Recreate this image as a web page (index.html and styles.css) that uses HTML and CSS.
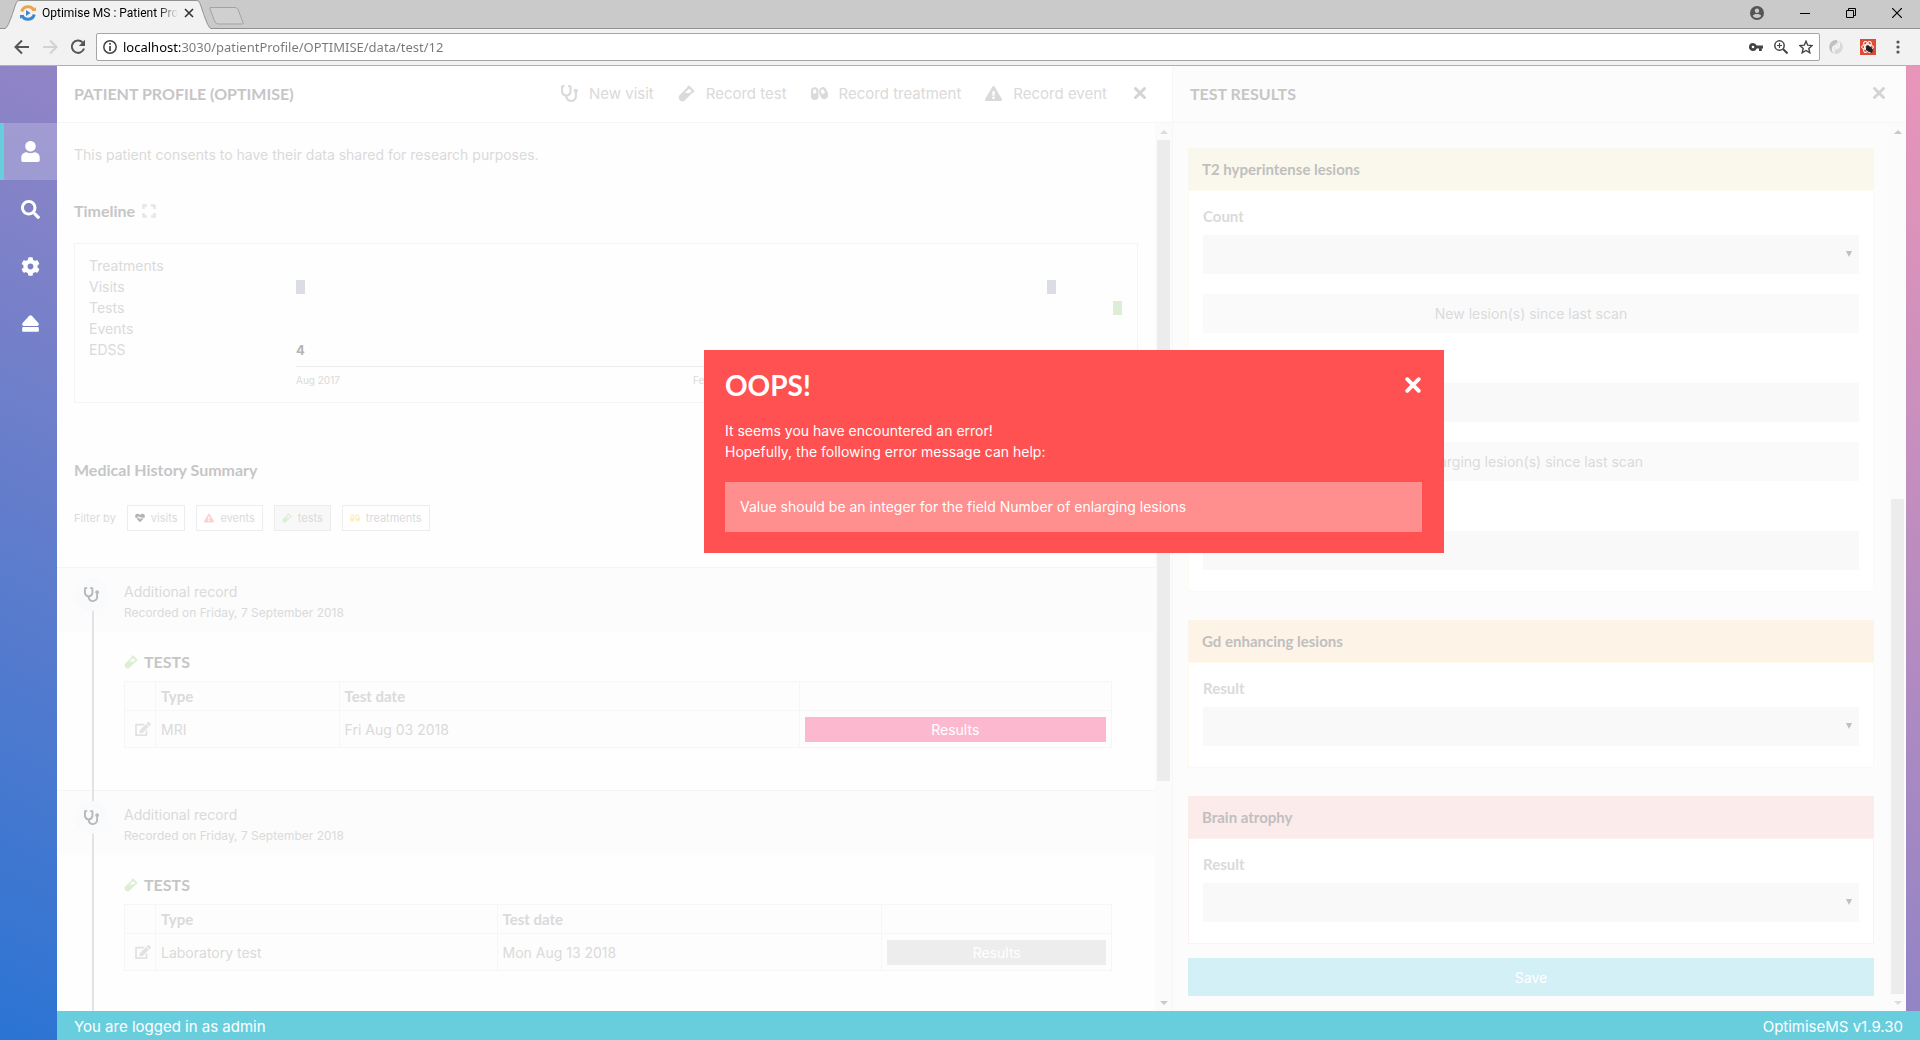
FILE: index.html
```html
<!DOCTYPE html>
<html lang="en">
<head>
<meta charset="utf-8">
<title>Optimise MS : Patient Profile</title>
<link rel="stylesheet" href="styles.css">
</head>
<body>
<svg class="sprite" aria-hidden="true">
  <symbol id="i-stethoscope" viewBox="0 0 512 512"><path d="M447.1 112c-34.2.5-62.3 28.4-63 62.6-.5 24.3 12.5 45.6 32 56.8V344c0 57.3-50.2 104-112 104-60 0-109.2-44.1-111.9-99.2C265 333.8 320 269.2 320 192V36.6c0-11.4-8.1-21.3-19.3-23.5L237.8.5c-13-2.6-25.6 5.8-28.2 18.8L206.4 35c-2.6 13 5.8 25.6 18.8 28.2l30.7 6.1v121.4c0 52.9-42.2 96.7-95.1 97.2-53.4.5-96.9-42.7-96.9-96V69.4l30.7-6.1c13-2.6 21.4-15.2 18.8-28.2l-3.1-15.7C107.7 6.4 95.1-2 82.1.6L19.3 13C8.1 15.3 0 25.1 0 36.6V192c0 77.3 55.1 142 128.1 156.8C130.7 439.2 208.6 512 304 512c97 0 176-75.4 176-168V231.4c19.1-11.1 32-31.7 32-55.4 0-35.7-29.2-64.5-64.9-64z"/></symbol>
  <symbol id="i-search" viewBox="0 0 512 512"><path d="M505 442.7L405.3 343c-4.5-4.5-10.6-7-17-7H372c27.6-35.3 44-79.7 44-128C416 93.1 322.9 0 208 0S0 93.1 0 208s93.1 208 208 208c48.3 0 92.7-16.4 128-44v16.3c0 6.4 2.5 12.5 7 17l99.7 99.7c9.4 9.4 24.6 9.4 33.9 0l28.3-28.3c9.4-9.4 9.4-24.6.1-34zM208 336c-70.7 0-128-57.2-128-128 0-70.7 57.2-128 128-128 70.7 0 128 57.2 128 128 0 70.7-57.2 128-128 128z"/></symbol>
  <symbol id="i-user" viewBox="0 0 448 512"><path d="M224 256c70.7 0 128-57.3 128-128S294.700 0 224 0 96 57.300 96 128s57.300 128 128 128zM314 277c-28 14-58 22-90 22s-62-8-90-22C50 277 0 340 0 400v72c0 22 18 40 40 40h368c22 0 40-18 40-40v-72c0-60-50-123-134-123z"/></symbol>
  <symbol id="i-cog" viewBox="0 0 512 512"><path d="M487.4 315.7l-42.6-24.6c4.3-23.2 4.3-47 0-70.2l42.600-24.600c4.900-2.800 7.100-8.600 5.500-14-11.100-35.600-30-67.800-54.700-94.600-3.800-4.100-10-5.100-14.800-2.300L380.800 110c-17.900-15.400-38.500-27.300-60.800-35.100V25.800c0-5.600-3.900-10.500-9.400-11.700-36.700-8.200-74.300-7.800-109.200 0-5.500 1.200-9.400 6.100-9.400 11.700V75c-22.200 7.900-42.800 19.800-60.800 35.100L88.700 85.500c-4.900-2.800-11-1.900-14.800 2.300-24.700 26.700-43.600 58.900-54.700 94.600-1.700 5.400.6 11.200 5.500 14L67.300 221c-4.300 23.200-4.300 47 0 70.200l-42.600 24.600c-4.900 2.800-7.100 8.600-5.500 14 11.100 35.600 30 67.800 54.700 94.600 3.800 4.100 10 5.100 14.800 2.300l42.600-24.600c17.900 15.400 38.500 27.300 60.800 35.100v49.200c0 5.600 3.900 10.500 9.400 11.700 36.700 8.200 74.300 7.800 109.200 0 5.500-1.200 9.400-6.100 9.400-11.700v-49.200c22.200-7.900 42.800-19.800 60.800-35.100l42.600 24.600c4.900 2.800 11 1.900 14.800-2.300 24.700-26.700 43.600-58.900 54.700-94.600 1.500-5.500-.7-11.300-5.600-14.100zM256 336c-44.100 0-80-35.900-80-80s35.900-80 80-80 80 35.900 80 80-35.900 80-80 80z"/></symbol>
  <symbol id="i-eject" viewBox="0 0 448 512"><path d="M448 384v64c0 17.700-14.300 32-32 32H32c-17.700 0-32-14.300-32-32v-64c0-17.700 14.300-32 32-32h384c17.700 0 32 14.300 32 32zM48 320h352c41.700 0 63.600-49.700 35.400-80.400L259.400 47.600c-19-20.700-51.800-20.700-70.800 0L12.700 239.600C-15.500 270.300 6.300 320 48 320z"/></symbol>
  <symbol id="i-times" viewBox="0 0 14 14"><path d="M2.500 2.500l9 9M11.500 2.500l-9 9" fill="none" stroke="currentColor" stroke-width="3" stroke-linecap="round"/></symbol>
  <symbol id="i-warning" viewBox="0 0 576 512"><path d="M569.5 440c18.500 32-4.700 72-41.600 72H48c-37 0-60-40-41.500-72L246.400 24c18.500-32 64.700-32 83.200 0l239.900 416zM288 354c-25.400 0-46 20.600-46 46s20.600 46 46 46 46-20.600 46-46-20.600-46-46-46zm-43.700-165.300l7.400 136c.3 6.300 5.600 11.300 12 11.300h48.600c6.300 0 11.600-5 12-11.300l7.400-136c.3-7-5.100-12.700-12-12.700h-63.400c-6.900 0-12.300 5.800-12 12.700z"/></symbol>
  <symbol id="i-edit" viewBox="0 0 576 512"><path d="M402.600 83.200l90.200 90.200c3.800 3.800 3.800 10 0 13.800L274.400 405.600l-92.800 10.300c-12.400 1.400-22.900-9.100-21.500-21.500l10.300-92.800L388.800 83.200c3.800-3.800 10-3.800 13.800 0zm162-22.900l-48.800-48.800c-15.200-15.200-39.900-15.200-55.200 0l-35.400 35.400c-3.800 3.800-3.800 10 0 13.800l90.200 90.200c3.800 3.800 10 3.800 13.800 0l35.400-35.400c15.200-15.300 15.200-40 0-55.200zM384 346.200V448H64V128h229.800c3.200 0 6.200-1.300 8.500-3.500l40-40c7.600-7.600 2.200-20.500-8.500-20.500H48C21.500 64 0 85.500 0 112v352c0 26.500 21.500 48 48 48h352c26.500 0 48-21.500 48-48V306.200c0-10.700-12.900-16-20.500-8.500l-40 40c-2.200 2.300-3.500 5.300-3.500 8.500z"/></symbol>
  <symbol id="i-vial" viewBox="0 0 16 16"><path fill-rule="evenodd" d="M9.700.6c.3-.3.700-.3 1 0l4.700 4.700c.3.300.3.700 0 1l-.7.700c-.3.300-.6.300-.9.100l-7.500 7.500a3.500 3.500 0 0 1-4.900-4.900L8.900 2.200c-.2-.300-.2-.600.1-.900zM10.300 3.600L6.400 7.500h4.400l2.100-2.100z"/></symbol>
  <symbol id="i-pills" viewBox="0 0 16 16"><path fill-rule="evenodd" d="M3.500 2A3.500 3.500 0 0 1 7 5.500v5a3.500 3.500 0 0 1-7 0v-5A3.500 3.500 0 0 1 3.500 2zm0 2A1.500 1.500 0 0 0 2 5.500V8h3V5.500A1.500 1.500 0 0 0 3.500 4z"/><path fill-rule="evenodd" d="M9.300 2.600a3.400 3.400 0 0 1 4.700 1l1.500 3.300a3.600 3.600 0 0 1-6 4.900L7.700 7.500V4.700a3.400 3.400 0 0 1 1.600-2.100zm.8 1.700a1.500 1.500 0 0 0-.6 2.100l1.100 2.200 2.700-1.500-1.200-2.200a1.500 1.500 0 0 0-2-.6z"/></symbol>
  <symbol id="i-heart" viewBox="0 0 16 14"><path d="M8 13.700L2 7.900h3l1.300-2 1.700 3.700 1.500-2.500.5.800H14zM.8 6.700C-.5 4 .5.500 4 .300c2 0 3 1 4 2.200 1-1.200 2-2.200 4-2.200 3.500.2 4.500 3.700 3.200 6.400h-4.500L9.400 4.800 8.100 6.900 6.300 3.300 4.300 6.700z"/></symbol>
  <symbol id="i-expand" viewBox="0 0 14 14"><path d="M1.500 5V1.500H5M9 1.500h3.500V5M12.500 9v3.500H9M5 12.500H1.500V9" fill="none" stroke="currentColor" stroke-width="2.500"/></symbol>
</svg>

<header class="browser">
  <div class="tabstrip">
    <svg class="tab-shape" width="250" height="29" aria-hidden="true">
      <path d="M0 28.500H5C9 28 15 4 17 1.500Q18 .5 20 .5H196Q198 .5 199 1.500C201 4 207 28 211 28.500H250V30H0z" fill="#f2f2f2" stroke="#919191"/>
      <path d="M211 7.500h24q2 0 3 2l5 13q1 1.500-1 1.500h-24q-2 0-3-2l-5-13q-1-1.500 1-1.500z" fill="#d0d0d0" stroke="#a3a3a3"/>
    </svg>
    <svg class="favicon" viewBox="0 0 16 16" width="16" height="16" aria-hidden="true"><g fill="none" stroke-width="3"><path d="M1.700 6.500A6.600 6.600 0 0 1 14 5.500" stroke="#f0a24a"/><path d="M14.300 9.500A6.600 6.600 0 0 1 2 10.500" stroke="#3f88cf"/></g><path d="M12 6h4V2z" fill="#f0a24a"/><path d="M4 10H0v4z" fill="#3f88cf"/><path d="M6 5l4.500 3L6 11z" fill="#3f88cf"/></svg>
    <span class="tab-title">Optimise MS : Patient Pro</span>
    <button class="tab-close" aria-label="Close tab"><svg width="10" height="10" viewBox="0 0 10 10"><path d="M1 1l8 8M9 1l-8 8" stroke="#333" stroke-width="1.600"/></svg></button>
    <div class="window-controls">
      <button aria-label="Account"><svg width="14" height="14" viewBox="0 0 14 14"><circle cx="7" cy="7" r="7" fill="#555"/><circle cx="7" cy="4.800" r="2.200" fill="#cacaca"/><path d="M2.800 10c1-2.600 7.400-2.600 8.400 0-1.700 2.600-6.700 2.600-8.400 0z" fill="#cacaca"/></svg></button>
      <button aria-label="Minimise"><svg width="10" height="10" viewBox="0 0 10 10"><path d="M0 5.500h10" stroke="#000"/></svg></button>
      <button aria-label="Restore"><svg width="10" height="10" viewBox="0 0 10 10" fill="none" stroke="#000"><path d="M.5 2.500h7v7h-7zM2.500 2.500v-2h7v7h-2"/></svg></button>
      <button aria-label="Close"><svg width="10" height="10" viewBox="0 0 10 10"><path d="M0 0l10 10M10 0L0 10" stroke="#000" stroke-width="1.200"/></svg></button>
    </div>
  </div>
  <div class="toolbar">
    <button aria-label="Back"><svg width="16" height="16" viewBox="0 0 16 16" fill="none" stroke="#555" stroke-width="2"><path d="M15 8H2M8 1.500L1.500 8 8 14.500"/></svg></button>
    <button aria-label="Forward"><svg width="16" height="16" viewBox="0 0 16 16" fill="none" stroke="#d2d2d2" stroke-width="2"><path d="M1 8h13M8 1.500L14.500 8 8 14.500"/></svg></button>
    <button aria-label="Reload"><svg width="16" height="16" viewBox="0 0 16 16"><path d="M12.600 3.400A6.200 6.200 0 1 0 14 9.500" fill="none" stroke="#555" stroke-width="2"/><path d="M15 .8V7H8.800z" fill="#555"/></svg></button>
    <div class="omnibox">
      <svg width="14" height="14" viewBox="0 0 14 14"><circle cx="7" cy="7" r="6.200" fill="none" stroke="#444" stroke-width="1.500"/><path d="M7 6v5M7 3v1.700" stroke="#444" stroke-width="1.700"/></svg>
      <input class="url" aria-label="Address" value="localhost:3030/patientProfile/OPTIMISE/data/test/12">
      <svg width="14" height="14" viewBox="0 0 14 14"><path fill-rule="evenodd" fill="#444" d="M4 3a4 4 0 0 1 3.700 2.600H14v2.800h-1.200V11H10V8.400H7.700A4 4 0 1 1 4 3zm0 2.700a1.300 1.300 0 1 0 0 2.600 1.300 1.300 0 0 0 0-2.600z"/></svg>
      <svg width="14" height="14" viewBox="0 0 14 14" fill="none" stroke="#444"><circle cx="5.500" cy="5.500" r="4.700" stroke-width="1.500"/><path d="M9 9l4.500 4.500" stroke-width="2"/><path d="M3 5.500h5M5.500 3v5" stroke-width="1.200"/></svg>
      <svg width="14" height="14" viewBox="0 0 14 14"><path d="M7 1.200l1.700 4 4.400.4-3.300 2.900 1 4.300L7 10.500l-3.800 2.300 1-4.300L.9 5.600l4.400-.4z" fill="none" stroke="#444" stroke-width="1.400"/></svg>
    </div>
    <button aria-label="JSON viewer"><svg width="16" height="16" viewBox="0 0 16 16"><path d="M9 1a7 7 0 0 0-3 13.600C2 11 4 5.500 8 5.500c-2 1-3 5 .5 6.500C5 9 6 4 10 4c-1-1.500-1-2.500-1-3z" fill="#c0c0c0"/><path d="M7 15a7 7 0 0 0 3-13.600C14 5 12 10.500 8 10.500c2-1 3-5-.5-6.500C11 7 10 12 6 12c1 1.500 1 2.500 1 3z" fill="#d8d8d8"/></svg></button>
    <button aria-label="React tools"><svg width="16" height="16" viewBox="0 0 16 16"><path fill="#dd4b39" d="M0 0h16v16H0z"/><g fill="none" stroke="#fff" stroke-width="1"><ellipse cx="7.500" cy="8" rx="6" ry="2.400"/><ellipse cx="7.500" cy="8" rx="6" ry="2.400" transform="rotate(60 7.500 8)"/><ellipse cx="7.500" cy="8" rx="6" ry="2.400" transform="rotate(-60 7.500 8)"/></g><path d="M6 8l2-2 1 1 2 1 2 3-1 3-3-1-3-2z" fill="#222"/></svg></button>
    <button aria-label="Menu"><svg width="4" height="14" viewBox="0 0 4 14" fill="#555"><circle cx="2" cy="2" r="1.600"/><circle cx="2" cy="7" r="1.600"/><circle cx="2" cy="12" r="1.600"/></svg></button>
  </div>
</header>

<div class="app">
  <nav class="sidebar" aria-label="Main">
    <a href="#patient" class="active" aria-label="Patient"><svg class="nav-icon user"><use href="#i-user"/></svg></a>
    <a href="#search" aria-label="Search"><svg class="nav-icon"><use href="#i-search"/></svg></a>
    <a href="#settings" aria-label="Settings"><svg class="nav-icon"><use href="#i-cog"/></svg></a>
    <a href="#logout" aria-label="Log out"><svg class="nav-icon"><use href="#i-eject"/></svg></a>
  </nav>

  <main class="panel">
    <div class="panel-head">
      <h1>PATIENT PROFILE (OPTIMISE)</h1>
      <div class="actions">
        <a href="#visit"><svg class="icon"><use href="#i-stethoscope"/></svg>New visit</a>
        <a href="#test"><svg class="icon"><use href="#i-vial"/></svg>Record test</a>
        <a href="#treatment"><svg class="icon"><use href="#i-pills"/></svg>Record treatment</a>
        <a href="#event"><svg class="icon"><use href="#i-warning"/></svg>Record event</a>
      </div>
      <button class="close" aria-label="Close profile"><svg class="icon"><use href="#i-times"/></svg></button>
    </div>
    <div class="panel-body">
      <div class="scroll">
        <div class="intro">
          <p class="consent">This patient consents to have their data shared for research purposes.</p>
          <h2>Timeline <svg class="expand"><use href="#i-expand"/></svg></h2>
          <div class="timeline">
            <div class="row"><span>Treatments</span><div class="plot"></div></div>
            <div class="row"><span>Visits</span><div class="plot"><i class="bar visit" style="left:0"></i><i class="bar visit" style="left:90.8%"></i></div></div>
            <div class="row"><span>Tests</span><div class="plot"><i class="bar test" style="left:98.8%"></i></div></div>
            <div class="row"><span>Events</span><div class="plot"></div></div>
            <div class="row"><span>EDSS</span><div class="plot"><b>4</b></div></div>
            <div class="axis"><span>Aug 2017</span><span>Feb 2018</span></div>
          </div>
          <h2 class="history">Medical History Summary</h2>
          <div class="filters">
            <span>Filter by</span>
            <button><svg class="f-heart"><use href="#i-heart"/></svg>visits</button>
            <button><svg class="f-event"><use href="#i-warning"/></svg>events</button>
            <button class="on"><svg class="f-test"><use href="#i-vial"/></svg>tests</button>
            <button><svg class="f-treat"><use href="#i-pills"/></svg>treatments</button>
          </div>
        </div>

        <section class="record">
          <div class="record-head">
            <span class="badge"><svg><use href="#i-stethoscope"/></svg></span>
            <h3>Additional record</h3>
            <p>Recorded on Friday, 7 September 2018</p>
          </div>
          <div class="record-body">
            <h4><svg class="f-test"><use href="#i-vial"/></svg>TESTS</h4>
            <table>
              <colgroup><col class="c-edit"><col class="c-mri"><col class="c-mri-date"><col></colgroup>
              <tr><th></th><th>Type</th><th>Test date</th><th></th></tr>
              <tr><td><a href="#edit" aria-label="Edit MRI"><svg class="edit"><use href="#i-edit"/></svg></a></td><td>MRI</td><td>Fri Aug 03 2018</td><td><button class="results current">Results</button></td></tr>
            </table>
          </div>
        </section>

        <section class="record next">
          <div class="record-head">
            <span class="badge"><svg><use href="#i-stethoscope"/></svg></span>
            <h3>Additional record</h3>
            <p>Recorded on Friday, 7 September 2018</p>
          </div>
          <div class="record-body">
            <h4><svg class="f-test"><use href="#i-vial"/></svg>TESTS</h4>
            <table>
              <colgroup><col class="c-edit"><col class="c-lab"><col class="c-lab-date"><col></colgroup>
              <tr><th></th><th>Type</th><th>Test date</th><th></th></tr>
              <tr><td><a href="#edit" aria-label="Edit laboratory test"><svg class="edit"><use href="#i-edit"/></svg></a></td><td>Laboratory test</td><td>Mon Aug 13 2018</td><td><button class="results">Results</button></td></tr>
            </table>
          </div>
        </section>
      </div>
      <div class="scrollbar" aria-hidden="true"><span class="up"></span><div class="track"><i class="thumb top"></i></div><span class="down"></span></div>
    </div>
  </main>

  <aside class="panel side">
    <div class="panel-head">
      <h1>TEST RESULTS</h1>
      <button class="close" aria-label="Close results"><svg class="icon"><use href="#i-times"/></svg></button>
    </div>
    <div class="panel-body">
      <form class="scroll form">
        <fieldset class="card yellow">
          <legend>T2 hyperintense lesions</legend>
          <div class="card-body">
            <label for="count">Count</label>
            <div class="select"><select id="count"><option></option></select></div>
            <button type="button" class="toggle">New lesion(s) since last scan</button>
            <label for="new">Number of new lesions</label>
            <input id="new" type="text">
            <button type="button" class="toggle">Enlarging lesion(s) since last scan</button>
            <label for="enl">Number of enlarging lesions</label>
            <input id="enl" type="text">
          </div>
        </fieldset>
        <fieldset class="card orange">
          <legend>Gd enhancing lesions</legend>
          <div class="card-body">
            <label for="gd">Result</label>
            <div class="select"><select id="gd"><option></option></select></div>
          </div>
        </fieldset>
        <fieldset class="card red">
          <legend>Brain atrophy</legend>
          <div class="card-body">
            <label for="atrophy">Result</label>
            <div class="select"><select id="atrophy"><option></option></select></div>
          </div>
        </fieldset>
        <button type="button" class="save">Save</button>
      </form>
      <div class="scrollbar" aria-hidden="true"><span class="up dark"></span><div class="track"><i class="thumb bottom"></i></div><span class="down light"></span></div>
    </div>
  </aside>

  <footer class="status"><span>You are logged in as admin</span><span>OptimiseMS v1.9.30</span></footer>

  <div class="overlay">
    <div class="dialog" role="alertdialog" aria-labelledby="oops">
      <div class="dialog-head">
        <h2 id="oops">OOPS!</h2>
        <button aria-label="Dismiss"><svg><use href="#i-times"/></svg></button>
      </div>
      <p>It seems you have encountered an error!<br>Hopefully, the following error message can help:</p>
      <div class="message">Value should be an integer for the field Number of enlarging lesions</div>
    </div>
  </div>
</div>
</body>
</html>
```

FILE: styles.css
```css
* { box-sizing: border-box; }
body {
  margin: 0;
  height: 100vh;
  display: flex;
  flex-direction: column;
  overflow: hidden;
  font: 14px/21px "Century Gothic", Inter, sans-serif;
  color: #dadada;
}
h1, h2, h3, h4, p { margin: 0; font-size: 14px; font-weight: normal; }
a { color: inherit; text-decoration: none; }
button, input, select { font: inherit; color: inherit; border: 0; background: none; padding: 0; margin: 0; border-radius: 0; }
svg { flex: none; display: block; }
.app svg { fill: currentColor; }
.sprite { display: none; }

/* Browser frame */
.browser { flex: none; font-family: "Segoe UI", "Noto Sans", sans-serif; }
.tabstrip { position: relative; height: 29px; display: flex; align-items: center; padding: 0 18px 2px 20px; background: #cacaca; border-bottom: 1px solid #919191; }
.tab-shape { position: absolute; left: 0; top: 0; }
.favicon { position: relative; }
.tab-title { position: relative; width: 136px; margin-left: 6px; font-family: "Segoe UI", Roboto, sans-serif; font-size: 12px; color: #000; white-space: nowrap; -webkit-mask-image: linear-gradient(90deg, #000 115px, transparent); mask-image: linear-gradient(90deg, #000 115px, transparent); }
.tab-close { position: relative; margin-left: 6px; }
.window-controls { display: flex; align-items: center; gap: 36px; margin-left: auto; }
.toolbar { height: 37px; display: flex; align-items: center; gap: 12px; padding: 0 20px 0 14px; background: #f2f2f2; border-bottom: 1px solid #b0b0b0; }
.omnibox { flex: 1; height: 28px; display: flex; align-items: center; gap: 11px; padding: 0 6px; margin: 0 -4px 0 -2px; background: #fff; border: 1px solid #a6a6a6; border-radius: 2px; }
.omnibox .url { flex: 1; margin-left: -5px; font-size: 13px; background: linear-gradient(90deg, #000 57px, #777 57px); -webkit-background-clip: text; background-clip: text; color: transparent; }
.toolbar > button:nth-last-child(2) { margin-left: 4px; }
.toolbar > button:last-child { margin-left: 8px; }

/* Shell */
.app {
  position: relative;
  flex: 1;
  min-height: 0;
  display: grid;
  grid-template-columns: 57px minmax(0, 1115fr) minmax(0, 734fr) 14px;
  grid-template-rows: minmax(0, 1fr) 29px;
  background: linear-gradient(to top right, #2b74d3, #8f84c6 50%, #ea95b9);
}
.sidebar { grid-row: 1 / 3; padding-top: 57px; color: #fff; }
.sidebar a { height: 57px; display: flex; align-items: center; justify-content: center; padding: 2px 0 0 4px; }
.sidebar a.active { background: rgba(255, 255, 255, .2); border-left: 4px solid #66cedd; padding: 0; }
.nav-icon { width: 19px; height: 19px; }
.nav-icon.user { height: 21px; }

.panel { display: flex; flex-direction: column; min-height: 0; background: #fefefe; }
.panel.side { background: #fcfcfc; border-left: 1px solid #f7f7f7; }
.panel-head { flex: none; height: 57px; display: flex; align-items: center; padding: 0 25px 2px 17px; background: #fff; border-bottom: 1px solid #f6f6f6; }
.side .panel-head { padding-left: 17px; padding-right: 20px; background: #fcfcfc; }
h1, h2, h4, legend, label, th { font-family: "Century Gothic", Lato, sans-serif; }
h1 { font-size: 16px; font-weight: bold; color: #c6c6c6; }
.actions { display: flex; gap: 24px; margin-left: auto; font-size: 15px; }
.actions a { display: flex; align-items: center; gap: 11px; }
.icon { width: 17px; height: 17px; }
.close { margin-left: 26px; color: #d4d4d4; }
.close .icon { width: 14px; height: 14px; }
.side .close { margin-left: auto; }
.panel-body { flex: 1; min-height: 0; display: flex; }
.scroll { flex: 1; min-width: 0; overflow: hidden; }

.scrollbar { flex: none; width: 17px; display: flex; flex-direction: column; align-items: center; background: #fbfbfb; }
.scrollbar .up, .scrollbar .down { height: 17px; display: flex; align-items: center; color: #dcdcdc; }
.scrollbar .up::after, .scrollbar .down::after { content: ""; border: 4px solid transparent; }
.scrollbar .up::after { border-top: 0; border-bottom-color: currentColor; }
.scrollbar .down::after { border-bottom: 0; border-top-color: currentColor; }
.scrollbar .up.dark { color: #c8c8c8; }
.scrollbar .down { color: #c8c8c8; }
.scrollbar .down.light { color: #dcdcdc; }
.track { flex: 1; width: 13px; display: flex; flex-direction: column; }
.thumb { background: #ececec; }
.thumb.top { height: 75%; }
.thumb.bottom { height: 58%; margin-top: auto; }

/* Profile */
.intro { padding: 21px 17px 36px; }
h2 { font-size: 16px; font-weight: bold; color: #c6c6c6; display: flex; align-items: center; gap: 7px; margin-top: 35px; }
.expand { width: 14px; height: 14px; color: #e6e6e6; }
.timeline { height: 160px; margin-top: 22px; padding: 11px 14px; border: 1px solid #f4f4f4; }
.row { display: flex; height: 21px; align-items: center; }
.row > span { flex: none; width: 207px; }
.plot { position: relative; flex: 1; height: 14px; font-size: 13px; line-height: 14px; color: #b4b4b4; }
.bar { position: absolute; top: 0; width: 9px; height: 14px; }
.bar.visit { background: #dadde5; }
.bar.test { background: #dcefd5; }
.axis { display: grid; grid-template-columns: 397px 1fr; margin: 6px 0 0 207px; padding-top: 5px; border-top: 1px solid #ececec; font-size: 10px; line-height: 16px; }
.history { margin-top: 56px; }
.filters { display: flex; align-items: center; gap: 11px; margin-top: 25px; font-size: 11px; }
.filters button { display: flex; align-items: center; gap: 6px; height: 26px; padding: 0 7px; background: #fff; border: 1px solid #ededed; }
.filters button.on { background: #f8f8f8; }
.filters svg { width: 10px; height: 10px; }
.f-heart { color: #b3b3b3; }
.f-event { color: #fcd0d0; }
.f-test { color: #dcefd5; }
.f-treat { color: #fdefc0; }

.record { position: relative; padding-bottom: 42px; }
.record::before { content: ""; position: absolute; left: 35px; top: 0; bottom: 0; width: 2px; background: #e0e4e8; z-index: 1; }
.record:not(.next)::before { top: 12px; }
.record.next { padding-bottom: 80px; }
.record-head { position: relative; height: 65px; padding: 13px 0 0 67px; background: #fcfcfc; border-top: 1px solid #f5f5f5; }
.record-head p { font-size: 12px; }
.badge { position: absolute; z-index: 2; left: 18px; top: 10px; width: 33px; height: 33px; border-radius: 50%; background: #f9fafc; color: #b8b8b8; display: flex; align-items: center; justify-content: center; }
.badge svg { width: 15px; height: 15px; }
.record-body { padding: 19px 43px 0 67px; }
h4 { display: flex; align-items: center; gap: 6px; font-size: 16px; font-weight: bold; color: #c6c6c6; margin-bottom: 9px; }
h4 svg { width: 14px; height: 14px; }
table { width: 100%; table-layout: fixed; border-collapse: collapse; background: #fdfdfd; }
.c-edit { width: 31px; }
.c-mri { width: 18.6%; }
.c-mri-date { width: 46.6%; }
.c-lab { width: 34.6%; }
.c-lab-date { width: 39%; }
th, td { border: 1px solid #f6f6f6; padding: 0 5px; text-align: left; }
th { height: 29px; font-size: 15px; }
td { height: 37px; }
.edit { width: 16px; height: 14px; margin-left: 5px; color: #e2e2e2; }
.results { display: block; width: 100%; height: 25px; background: #ededed; color: #fff; }
.results.current { background: #fbb8cf; }

/* Test results form */
.form { padding: 25px 15px 0 15px; }
.card { margin: 0 0 28px; padding: 0; border: 0; min-width: 0; }
.card legend { display: block; width: 100%; padding: 0 14px; font-size: 15px; line-height: 42px; font-weight: bold; color: #bfbfbf; background: var(--head); }
.card-body { display: flex; flex-direction: column; padding: 14px 14px 21px; background: #fff; border: 1px solid var(--line); }
.yellow { --head: #faf8ec; --line: #fdfbf0; }
.orange { --head: #fef3e7; --line: #fff9ec; }
.red { --head: #fcebeb; --line: #fff0f0; margin-bottom: 14px; }
label { font-size: 15px; font-weight: bold; line-height: 22px; margin-bottom: 8px; }
.select { position: relative; display: flex; }
.select::after { content: ""; position: absolute; right: 7px; top: 16px; border: 3px solid transparent; border-top: 6px solid #c0c0c0; border-bottom: 0; }
select, .card input { appearance: none; width: 100%; height: 39px; background: #f9f9f9; }
.toggle { height: 39px; margin: 20px 0; background: #fafafa; }
.save { display: block; width: 100%; height: 38px; background: #d3f0f6; color: #fff; }

.status { grid-column: 2 / 5; display: flex; justify-content: space-between; align-items: center; padding: 2px 17px 0; background: #68cede; color: #fff; font-size: 15px; }

/* Error dialog */
.overlay { position: absolute; inset: 0; z-index: 5; display: flex; justify-content: center; align-items: flex-start; padding: 284px 0 0 228px; }
.dialog { width: 740px; padding: 20px 22px 21px 21px; background: #ff5151; color: #fff; }
.dialog-head { display: flex; justify-content: space-between; align-items: center; margin-bottom: 20px; }
.dialog-head h2 { margin: 0; font-size: 28px; line-height: 30px; color: #fff; }
.dialog-head svg { width: 18px; height: 18px; }
.message { margin-top: 20px; padding: 15px; line-height: 20px; background: #ff8e8e; }
```
